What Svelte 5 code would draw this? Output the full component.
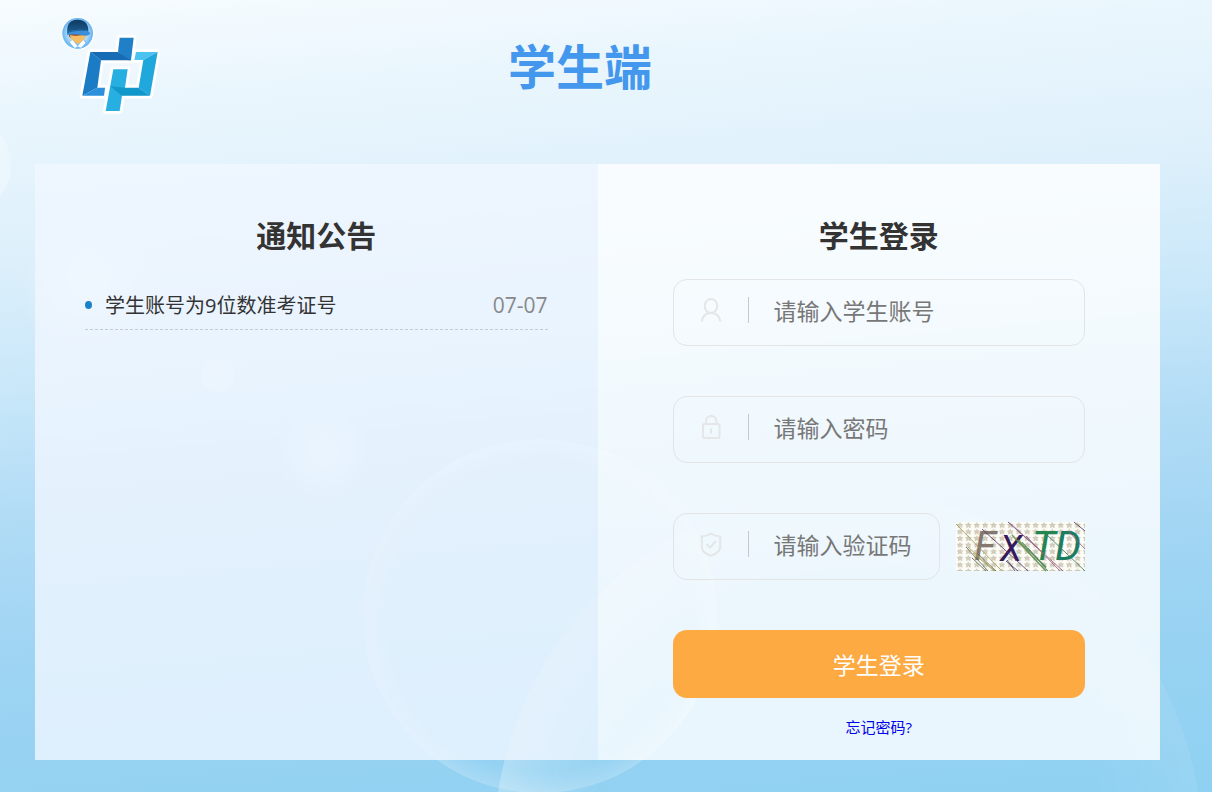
<script lang="ts">
	type Notice = { title: string; date: string }

	const notices: Notice[] = [{ title: '学生账号为9位数准考证号', date: '07-07' }]

	let account = $state('')
	let password = $state('')
	let captcha = $state('')

	function handleSubmit(event: SubmitEvent) {
		event.preventDefault()
	}
</script>

<div class="page">
	<svg class="scene" viewBox="0 0 1212 792" preserveAspectRatio="none" aria-hidden="true">
		<defs>
			<radialGradient id="ring">
				<stop offset="0.87" stop-color="#fff" stop-opacity="0" />
				<stop offset="0.94" stop-color="#fff" stop-opacity="0.1" />
				<stop offset="1" stop-color="#fff" stop-opacity="0.2" />
			</radialGradient>
			<radialGradient id="dome">
				<stop offset="0.7" stop-color="#fff" stop-opacity="0" />
				<stop offset="1" stop-color="#fff" stop-opacity="0.28" />
			</radialGradient>
			<linearGradient id="dome-fade">
				<stop offset="0" stop-color="#fff" />
				<stop offset="0.4" stop-color="#fff" stop-opacity="0.3" />
				<stop offset="1" stop-color="#fff" stop-opacity="0.3" />
			</linearGradient>
			<mask id="dome-mask">
				<rect x="480" y="480" width="732" height="312" fill="url(#dome-fade)" />
			</mask>
			<radialGradient id="glow">
				<stop offset="0" stop-color="#fff" stop-opacity="0.4" />
				<stop offset="1" stop-color="#fff" stop-opacity="0" />
			</radialGradient>
		</defs>
		<circle cx="-40" cy="165" r="51" fill="#fff" opacity="0.25" />
		<circle cx="90" cy="290" r="70" fill="url(#glow)" />
		<circle cx="218" cy="375" r="17" fill="#fff" opacity="0.3" />
		<circle cx="324" cy="455" r="48" fill="url(#glow)" />
		<circle cx="540" cy="616" r="177" fill="url(#ring)" />
		<circle cx="848" cy="846" r="354" fill="url(#dome)" mask="url(#dome-mask)" />
	</svg>

	<header class="header">
		<svg class="logo" viewBox="0 0 360 360" role="img" aria-label="校徽">
			<defs>
				<radialGradient id="avatar-bg">
					<stop offset="0" stop-color="#d9f1ff" />
					<stop offset="0.7" stop-color="#a4d8fb" />
					<stop offset="1" stop-color="#63aef0" />
				</radialGradient>
				<linearGradient id="cap" x2="0" y2="1">
					<stop offset="0" stop-color="#0e3a60" />
					<stop offset="1" stop-color="#1c5c92" />
				</linearGradient>
			</defs>
			<g fill="#fff" stroke="#fff" stroke-width="17" stroke-linejoin="round">
				<path d="M209 98h42l-8 68h-90l-11 82h23l-3 24H97l24-131h83z" />
				<path d="M258 141h65l-23 131h-84l-7 46h-42l23-125h43l-8 55h41l14-83h-27z" />
			</g>
			<path fill="#1f80c8" d="M209 98h42l-8 68h-7l-32-25z" />
			<path fill="#176cb5" d="M121 141h83l39 25h-90z" />
			<path fill="#1b7bc5" d="M121 141l32 25-11 82-45 24z" />
			<path fill="#2c90dc" d="M142 248h23l-3 24H97z" />
			<path fill="#28afe1" d="M190 193h43l-8 55-9 24-7 46h-42z" />
			<path fill="#4bc2ef" d="M258 141h65l-43 24h-27z" />
			<path fill="#20a7dc" d="M323 141l-23 131-34-24 14-83z" />
			<path fill="#1197ca" d="M181 244l44 4h41l34 24h-84z" />
			<circle cx="83" cy="85" r="50" fill="#fff" opacity="0.8" />
			<circle cx="83" cy="85" r="46" fill="url(#avatar-bg)" />
			<path fill="#75bdf1" d="M53 119q7-15 20-17h22q14 4 20 17-30 22-62 0z" />
			<path fill="#fff" d="M67 104l16 20-9 5-15-17zM99 104l-16 20 10 4 14-15z" />
			<path fill="#8b3c18" d="M54 78l4 17 10 7 26-4 17-11-4-12z" />
			<path fill="#f4bd68" d="M59 90q24 6 53-4l-10 18-18 14-20-15z" />
			<path fill="url(#cap)" d="M52 82q-4-36 30-38 34 0 33 36z" />
			<path fill="#3b8fd8" d="M51 80q24-8 51-5 13 1 18 9 0 8-15 8-33-6-54-2z" />
			<path fill="#2064a0" d="M51 80q24-8 51-5l8 3q-33-2-58 6z" />
		</svg>
		<h1 class="title">学生端</h1>
	</header>

	<main class="panels">
		<section class="panel panel-notice">
			<h2 class="panel-heading">通知公告</h2>
			<ul class="notice-list">
				{#each notices as notice}
					<li class="notice-item">
						<span class="notice-title">{notice.title}</span>
						<time class="notice-date">{notice.date}</time>
					</li>
				{/each}
			</ul>
		</section>

		<section class="panel panel-login">
			<h2 class="panel-heading">学生登录</h2>
			<form class="login-form" onsubmit={handleSubmit}>
				<div class="field">
					<label class="field-icon" for="account" aria-label="学生账号">
						<svg viewBox="0 0 24 26">
							<ellipse cx="12" cy="9" rx="6.3" ry="7" />
							<path d="M2.5 24.5C3.5 19 7 16 12 16s8.5 3 9.5 8.5" />
						</svg>
					</label>
					<input id="account" type="text" placeholder="请输入学生账号" bind:value={account} />
				</div>
				<div class="field">
					<label class="field-icon" for="password" aria-label="密码">
						<svg viewBox="0 0 24 26">
							<rect x="4" y="10" width="16.5" height="14" rx="1.5" />
							<path d="M7 10V7a5.2 5 0 0 1 10.4 0v3M12 14.5v5" />
						</svg>
					</label>
					<input id="password" type="password" placeholder="请输入密码" bind:value={password} />
				</div>
				<div class="captcha-row">
					<div class="field">
						<label class="field-icon" for="captcha" aria-label="验证码">
							<svg viewBox="0 0 24 26">
								<path d="M12 2.5c3 2 6 2.8 9.2 3V16c0 4-4 7-9.2 8.8C6.8 23 2.8 20 2.8 16V5.5c3.2-.2 6.200-1 9.2-3z" />
								<path d="M7.5 13l3.5 3.5 6-6.5" />
							</svg>
						</label>
						<input id="captcha" type="text" placeholder="请输入验证码" bind:value={captcha} />
					</div>
					<button class="captcha-image" type="button" aria-label="刷新验证码">
						<svg viewBox="0 0 129 49">
							<defs>
								<pattern id="stars" width="8.4" height="6.6" patternUnits="userSpaceOnUse">
									<path d="M4 .6l.8 1.800h2L5.200 3.600l.8 2L4 4.400 2 5.600l.8-2L1.200 2.400h2z" />
								</pattern>
							</defs>
							<rect width="129" height="49" fill="#fdfdf8" />
							<rect width="129" height="49" fill="url(#stars)" />
							<g class="letters">
								<text x="18" y="38" font-size="41" fill="#85786f">F</text>
								<text x="44" y="39" font-size="36" fill="#35195c">X</text>
								<text x="76" y="38" font-size="41" fill="#23854f">T</text>
								<text x="99" y="38" font-size="41" fill="#1c7c62">D</text>
							</g>
							<g class="noise">
								<path stroke="#a39a50" d="M0 2l46 47M12 25l27 24M17 31l21 18" />
								<path stroke="#5e6d58" d="M10 25l22 24M16 36l14 13M22 32l18 17" />
								<path stroke="#553b75" d="M26 7l46 42M52 0l34 30M50 39l12 10" />
								<path stroke="#5f8b45" d="M56 13l34 36M62 18l28 27" stroke-width="1.6" />
								<path stroke="#995d82" d="M55 2l52 47M70 14l34 35M112 9l17 18" />
								<path stroke="#3d7b5f" d="M91 13l38 36M72 26l18 20M66 20l26 29" />
								<path stroke="#4b3857" d="M118 0l11 9M51 38l8 11" />
							</g>
						</svg>
					</button>
				</div>
				<button class="btn-login" type="submit">学生登录</button>
			</form>
			<a class="forgot" href="#forgot">忘记密码?</a>
		</section>
	</main>
</div>

<style>
	:global(body) {
		margin: 0;
	}

	.page {
		position: relative;
		box-sizing: border-box;
		min-height: 100vh;
		padding-bottom: 32px;
		display: flex;
		flex-direction: column;
		font-family: 'Open Sans', 'Noto Sans CJK SC', sans-serif;
		color: #333;
		background: linear-gradient(
			175deg,
			#f7fcff 0%,
			#eaf6fd 12%,
			#def0fb 28%,
			#c8e7f9 44%,
			#b2dcf6 57%,
			#a0d5f3 72%,
			#97d2f2 84%,
			#8fd1f2 100%
		);
	}

	.scene {
		position: absolute;
		inset: 0;
		width: 100%;
		height: 100%;
	}

	.header {
		position: relative;
		display: grid;
		grid-template-columns: 1fr auto 1fr;
		height: 164px;
		padding-right: 52px;
	}

	.logo {
		width: 120px;
		height: 120px;
		margin: 5px 0 0 50px;
	}

	.title {
		margin: 32px 0 0;
		font-size: 48px;
		line-height: 70px;
		font-weight: 700;
		color: #4397ec;
	}

	.panels {
		position: relative;
		flex: 1;
		display: grid;
		grid-template-columns: repeat(2, minmax(0, 1fr));
		margin: 0 52px 0 35px;
	}

	.panel {
		padding-top: 50px;
	}

	.panel-notice {
		padding-left: 50px;
		padding-right: 50px;
		background: rgba(240, 246, 255, 0.8);
	}

	.panel-login {
		display: flex;
		flex-direction: column;
		padding-left: 75px;
		padding-right: 75px;
		background: rgba(255, 255, 255, 0.8);
	}

	.panel-heading {
		margin: 0;
		font-size: 30px;
		line-height: 44px;
		font-weight: 700;
		text-align: center;
	}

	.notice-list {
		margin: 22px 0 0;
		padding: 0;
		list-style: none;
	}

	.notice-item {
		display: flex;
		align-items: center;
		height: 49px;
		border-bottom: 1px dashed #c4ccd4;
	}

	.notice-item::before {
		content: '';
		width: 7px;
		height: 8px;
		margin-right: 13px;
		border-radius: 50%;
		background: #1c82c8;
	}

	.notice-title {
		flex: 1;
		font-size: 20px;
	}

	.notice-date {
		font-size: 21px;
		color: #888;
	}

	.login-form {
		display: flex;
		flex-direction: column;
		gap: 50px;
		margin-top: 21px;
	}

	.field {
		box-sizing: border-box;
		display: flex;
		align-items: center;
		flex: 1;
		min-width: 0;
		min-height: 67px;
		border: 1px solid #e4e4e4;
		border-radius: 14px;
	}

	.field-icon {
		flex: none;
		box-sizing: border-box;
		width: 75px;
		height: 26px;
		margin-bottom: 6px;
		padding-left: 25px;
		border-right: 1px solid #c8c8c8;
	}

	.field-icon svg {
		display: block;
		width: 24px;
		height: 26px;
		fill: none;
		stroke: #e4e6e8;
		stroke-width: 2;
	}

	.field input {
		flex: 1;
		min-width: 0;
		height: 34px;
		margin: 0 8px 4px 0;
		padding: 0 0 0 25px;
		border: 0;
		outline: 0;
		background: none;
		font: inherit;
		font-size: 23px;
		color: #333;
	}

	.field input::placeholder {
		color: #777;
		opacity: 1;
	}

	.captcha-row {
		display: flex;
		align-items: center;
		gap: 16px;
	}

	.captcha-image {
		flex: none;
		width: 129px;
		height: 49px;
		padding: 0;
		border: 0;
		background: none;
		cursor: pointer;
	}

	.captcha-image svg {
		display: block;
		overflow: visible;
	}

	#stars path {
		fill: #d8d2c2;
		stroke: #b9b09c;
		stroke-width: 0.6;
	}

	.letters {
		font-family: Roboto, sans-serif;
		font-style: italic;
		font-weight: 400;
	}

	.noise {
		fill: none;
		stroke-width: 1;
		opacity: 0.85;
	}

	.btn-login {
		height: 68px;
		padding: 0;
		border: 0;
		border-radius: 14px;
		background: #fdaa43;
		color: #fff;
		font: inherit;
		font-size: 23px;
		cursor: pointer;
	}

	.forgot {
		margin: 18px auto 20px;
		font-size: 15px;
		line-height: 22px;
		color: #00e;
		text-decoration: none;
	}
</style>
